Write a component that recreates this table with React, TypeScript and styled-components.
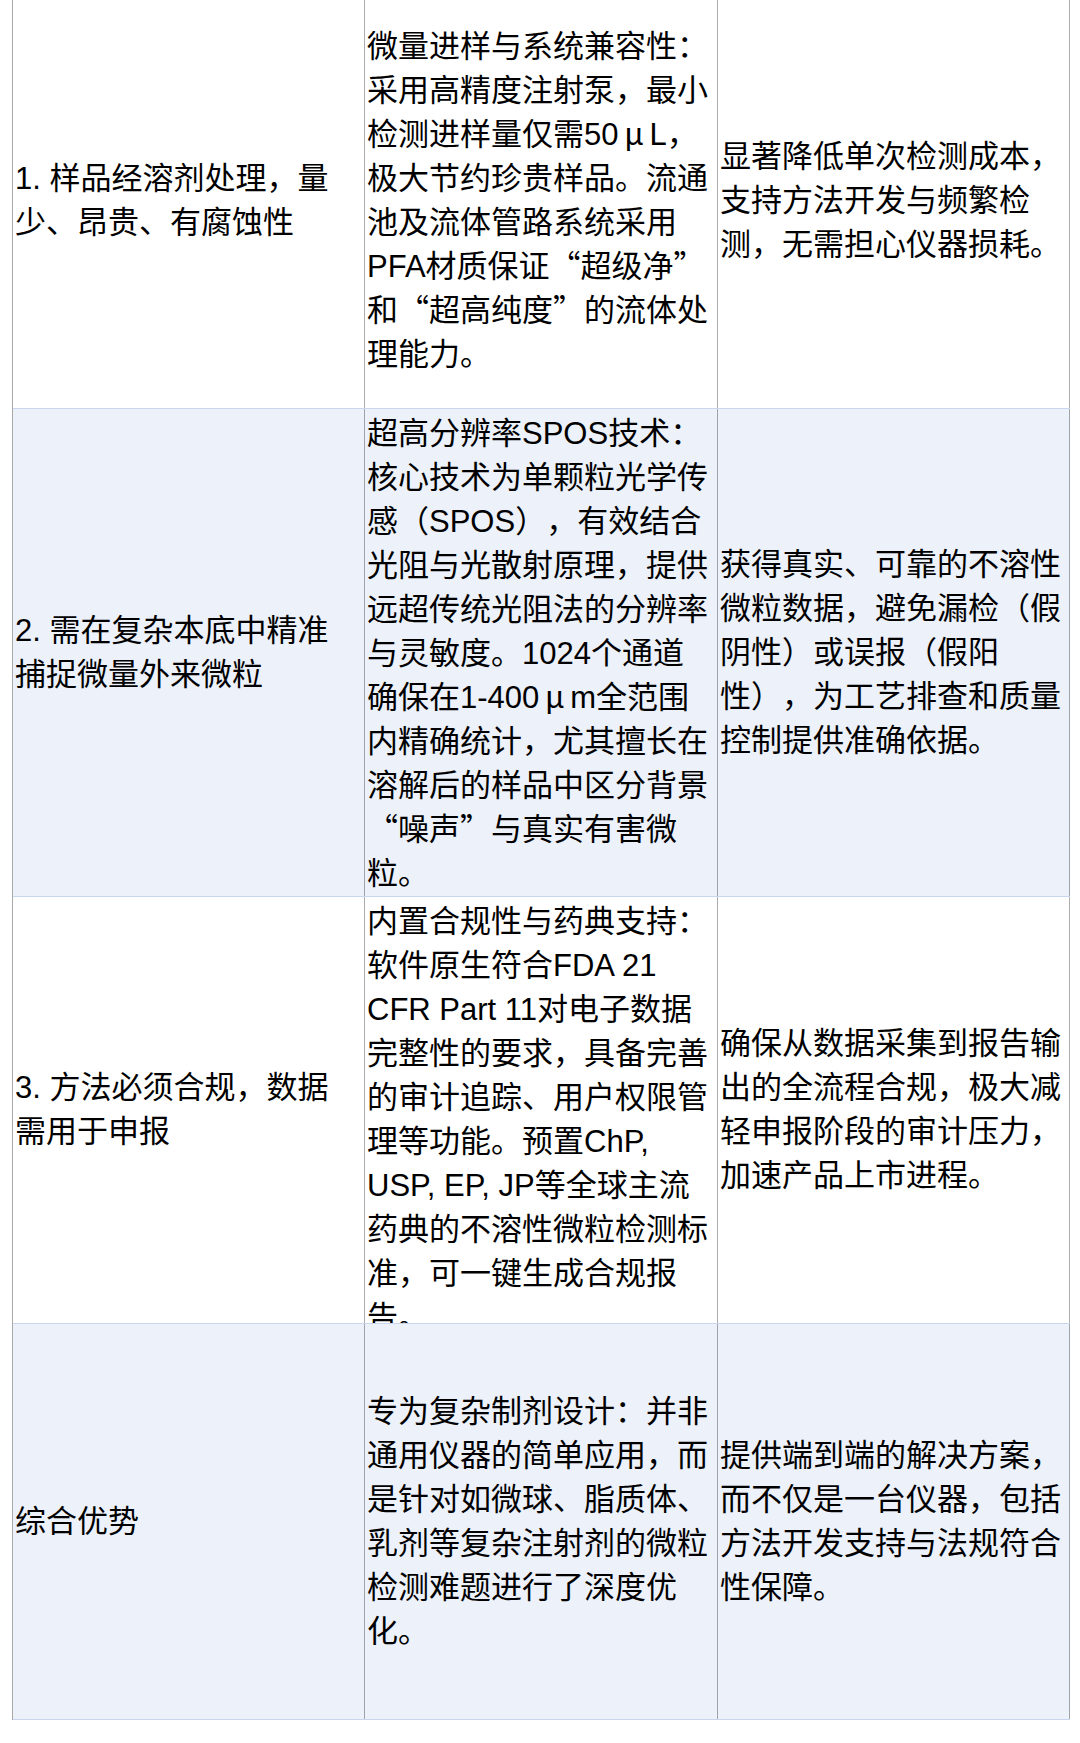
import React from 'react';
import styled, { createGlobalStyle } from 'styled-components';

const GlobalStyle = createGlobalStyle`
  *, *::before, *::after { box-sizing: border-box; }
  html, body { margin: 0; padding: 0; background: #ffffff; }
  body {
    font-family: "Liberation Sans", "Noto Sans CJK SC", sans-serif;
    color: #000000;
  }
`;

const Page = styled.div`
  padding: 0 0 0 12px;
  margin-top: -6px;
`;

const Table = styled.div`
  width: 1058px;
  border-left: 1px solid #a9a9a9;
  display: flex;
  flex-direction: column;
`;

const Row = styled.div<{ $h: number; $alt?: boolean }>`
  display: grid;
  grid-template-columns: 352px 353px 352px;
  height: ${(p) => p.$h}px;
  background: ${(p) => (p.$alt ? '#ecf1fa' : '#ffffff')};
  border-bottom: 1px solid #c9d6ef;
`;

const Cell = styled.div`
  display: flex;
  flex-direction: column;
  min-height: 0;
  overflow: hidden;
  padding: 3px 6px 3px 2px;
  border-right: 1px solid rgba(0, 0, 0, 0.32);
`;

const Text = styled.p`
  margin: auto 0;
  font-size: 31px;
  line-height: 44px;
  text-spacing-trim: space-all;
  text-autospace: no-autospace;
  line-break: strict;
  word-break: normal;
`;

const Wide = styled.span`
  font-family: "Noto Sans CJK SC", sans-serif;
  line-height: 1;
`;

const Micro = styled.span`
  display: inline-block;
  width: 1em;
  line-height: 1;
  text-align: center;
  font-family: "Noto Sans CJK SC", sans-serif;
`;

function rich(s: string) {
  return s.split(/([“”μ])/).map((part, i) => {
    if (part === 'μ') return <Micro key={i}>{part}</Micro>;
    if (part === '“')
      return (
        <React.Fragment key={i}>
          <wbr />
          <Wide>{part}</Wide>
        </React.Fragment>
      );
    if (part === '”')
      return (
        <React.Fragment key={i}>
          <Wide>{part}</Wide>
          <wbr />
        </React.Fragment>
      );
    return <React.Fragment key={i}>{part}</React.Fragment>;
  });
}

type RowData = { h: number; alt?: boolean; cells: [string, string, string] };

const rows: RowData[] = [
  {
    h: 415,
    cells: [
      '1. 样品经溶剂处理，量少、昂贵、有腐蚀性',
      '微量进样与系统兼容性：采用高精度注射泵，最小检测进样量仅需50μL，极大节约珍贵样品。流通池及流体管路系统采用PFA材质保证“超级净”和“超高纯度”的流体处理能力。',
      '显著降低单次检测成本，支持方法开发与频繁检测，无需担心仪器损耗。',
    ],
  },
  {
    h: 488,
    alt: true,
    cells: [
      '2. 需在复杂本底中精准捕捉微量外来微粒',
      '超高分辨率SPOS技术：核心技术为单颗粒光学传感（SPOS），有效结合光阻与光散射原理，提供远超传统光阻法的分辨率与灵敏度。1024个通道确保在1-400μm全范围内精确统计，尤其擅长在溶解后的样品中区分背景“噪声”与真实有害微粒。',
      '获得真实、可靠的不溶性微粒数据，避免漏检（假阴性）或误报（假阳性），为工艺排查和质量控制提供准确依据。',
    ],
  },
  {
    h: 427,
    cells: [
      '3. 方法必须合规，数据需用于申报',
      '内置合规性与药典支持：软件原生符合FDA 21 CFR Part 11对电子数据完整性的要求，具备完善的审计追踪、用户权限管理等功能。预置ChP, USP, EP, JP等全球主流药典的不溶性微粒检测标准，可一键生成合规报告。',
      '确保从数据采集到报告输出的全流程合规，极大减轻申报阶段的审计压力，加速产品上市进程。',
    ],
  },
  {
    h: 396,
    alt: true,
    cells: [
      '综合优势',
      '专为复杂制剂设计：并非通用仪器的简单应用，而是针对如微球、脂质体、乳剂等复杂注射剂的微粒检测难题进行了深度优化。',
      '提供端到端的解决方案，而不仅是一台仪器，包括方法开发支持与法规符合性保障。',
    ],
  },
];

export default function App() {
  return (
    <>
      <GlobalStyle />
      <Page>
        <Table>
          {rows.map((r, i) => (
            <Row key={i} $h={r.h} $alt={r.alt}>
              {r.cells.map((c, j) => (
                <Cell key={j}>
                  <Text>{rich(c)}</Text>
                </Cell>
              ))}
            </Row>
          ))}
        </Table>
      </Page>
    </>
  );
}
